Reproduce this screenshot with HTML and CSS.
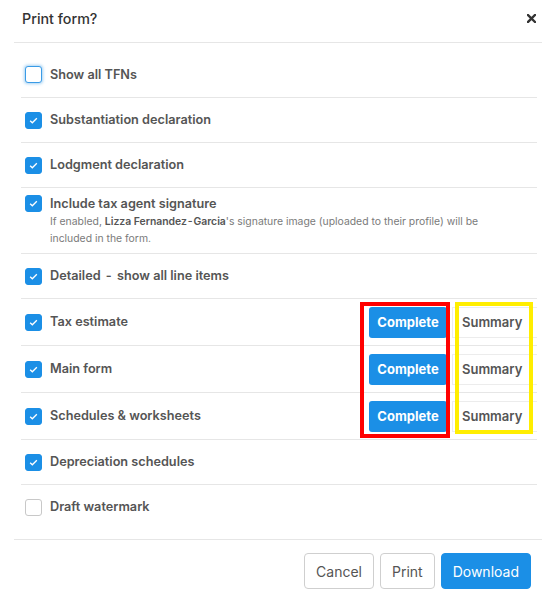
FILE: index.html
```html
<!DOCTYPE html>
<html lang="en">
<head>
<meta charset="utf-8">
<title>Print form?</title>
<link rel="stylesheet" href="styles.css">
</head>
<body>
<div class="modal">
  <div class="modal-header">
    <h1 class="modal-title">Print form?</h1>
    <button class="close" aria-label="Close">
      <svg width="9" height="9" viewBox="0 0 9 9"><path d="M1 1L8 8M8 1L1 8" stroke="#333" stroke-width="2.4" stroke-linecap="square"/></svg>
    </button>
  </div>
  <div class="modal-body">
    <div class="row">
      <span class="cb focus"></span><span class="label">Show all TFNs</span>
    </div>
    <div class="row">
      <span class="cb checked"><svg viewBox="0 0 18 18"><path d="M5 9.2l2.6 2.5L13 6.3" fill="none" stroke="#fff" stroke-width="1.6"/></svg></span><span class="label">Substantiation declaration</span>
    </div>
    <div class="row">
      <span class="cb checked"><svg viewBox="0 0 18 18"><path d="M5 9.2l2.6 2.5L13 6.3" fill="none" stroke="#fff" stroke-width="1.6"/></svg></span><span class="label">Lodgment declaration</span>
    </div>
    <div class="row tall">
      <span class="cb checked"><svg viewBox="0 0 18 18"><path d="M5 9.2l2.6 2.5L13 6.3" fill="none" stroke="#fff" stroke-width="1.6"/></svg></span>
      <div class="stack">
        <span class="label">Include tax agent signature</span>
        <p class="help">If enabled, <b>Lizza Fernandez&#8202;-&#8202;Garcia</b>'s signature image (uploaded to their profile) will be included in the form.</p>
      </div>
    </div>
    <div class="row">
      <span class="cb checked"><svg viewBox="0 0 18 18"><path d="M5 9.2l2.6 2.5L13 6.3" fill="none" stroke="#fff" stroke-width="1.6"/></svg></span><span class="label">Detailed&#8201; - &#8201;show all line items</span>
    </div>
    <div class="group">
      <div class="row actions">
        <span class="cb checked"><svg viewBox="0 0 18 18"><path d="M5 9.2l2.6 2.5L13 6.3" fill="none" stroke="#fff" stroke-width="1.6"/></svg></span><span class="label grow">Tax estimate</span>
        <button class="btn-complete">Complete</button><button class="btn-summary">Summary</button>
      </div>
      <div class="row actions">
        <span class="cb checked"><svg viewBox="0 0 18 18"><path d="M5 9.2l2.6 2.5L13 6.3" fill="none" stroke="#fff" stroke-width="1.6"/></svg></span><span class="label grow">Main form</span>
        <button class="btn-complete">Complete</button><button class="btn-summary">Summary</button>
      </div>
      <div class="row actions">
        <span class="cb checked"><svg viewBox="0 0 18 18"><path d="M5 9.2l2.6 2.5L13 6.3" fill="none" stroke="#fff" stroke-width="1.6"/></svg></span><span class="label grow">Schedules &amp; worksheets</span>
        <button class="btn-complete">Complete</button><button class="btn-summary">Summary</button>
      </div>
      <div class="mark red"></div>
      <div class="mark yellow"></div>
    </div>
    <div class="row">
      <span class="cb checked"><svg viewBox="0 0 18 18"><path d="M5 9.2l2.6 2.5L13 6.3" fill="none" stroke="#fff" stroke-width="1.6"/></svg></span><span class="label">Depreciation schedules</span>
    </div>
    <div class="row last">
      <span class="cb"></span><span class="label">Draft watermark</span>
    </div>
  </div>
  <div class="modal-footer">
    <button class="btn">Cancel</button>
    <button class="btn">Print</button>
    <button class="btn primary">Download</button>
  </div>
</div>
</body>
</html>
```

FILE: styles.css
```css
* { box-sizing: border-box; }
html, body { margin: 0; padding: 0; background: #fff; }
body {
  font-family: Inter, "Noto Sans", "Liberation Sans", sans-serif;
  color: #555;
  width: 542px;
  overflow: hidden;
}
.modal {
  margin-left: 14px;
  width: 528px;
}
.modal-header {
  height: 43px;
  display: flex;
  align-items: center;
  justify-content: space-between;
  padding: 0 6px 6px 8px;
  border-bottom: 1px solid #e6e6e6;
}
.modal-title {
  margin: 0;
  font-size: 14.3px;
  font-weight: 500;
  color: #333;
}
.close {
  border: 0;
  background: none;
  padding: 0;
  width: 9px;
  height: 9px;
  display: flex;
}
.modal-body {
  padding: 10px 5px 10px 7px;
}
.row {
  display: flex;
  align-items: center;
  min-height: 45px;
  padding-left: 4px;
  border-bottom: 1px solid #e6e6e6;
}
.row.last { border-bottom: 0; min-height: 44px; }
.row.tall {
  align-items: flex-start;
  min-height: 66px;
  padding-top: 7px;
}
.row.actions { min-height: 47px; }
.cb {
  flex: none;
  width: 17px;
  height: 17px;
  border-radius: 3px;
  border: 1px solid #c8c8c8;
  background: #fff;
  margin-right: 8px;
  display: flex;
}
.cb.focus {
  border-color: #3a9be6;
  box-shadow: 0 0 3px 1px rgba(58, 155, 230, 0.45);
  margin-top: -2px;
}
.cb.checked {
  background: #1b8fe6;
  border-color: #1b8fe6;
}
.cb svg { width: 100%; height: 100%; }
.label {
  font-size: 12.7px;
  font-weight: 600;
  line-height: 18px;
  color: #555;
}
.grow { flex: 1; }
.stack { display: flex; flex-direction: column; }
.help {
  margin: 0;
  max-width: 432px;
  font-size: 10.4px;
  line-height: 17px;
  color: #7a7a7a;
}
.help b { font-weight: 600; color: #555; }
.btn-complete {
  width: 78px;
  height: 31px;
  border: 0;
  border-radius: 3px;
  background: #1b8fe6;
  color: #fff;
  font-family: inherit;
  font-size: 13px;
  font-weight: 700;
  margin-right: 5px;
}
.btn-summary {
  width: 85px;
  height: 31px;
  border: 1px solid #ececec;
  border-right: 0;
  background: #fff;
  color: #555;
  font-family: inherit;
  font-size: 13px;
  font-weight: 600;
  text-align: left;
  padding: 0 0 0 9px;
}
.group { position: relative; }
.mark {
  position: absolute;
  top: 3px;
  border: 4px solid;
  pointer-events: none;
}
.mark.red {
  left: 339px;
  width: 90px;
  height: 136px;
  border-color: #f00;
}
.mark.yellow {
  left: 434px;
  width: 78px;
  height: 132px;
  border-color: #ffee00;
}
.modal-footer {
  border-top: 1px solid #e6e6e6;
  display: flex;
  justify-content: flex-end;
  gap: 6px;
  padding: 13px 11px 11px 0;
}
.btn {
  height: 36px;
  border: 1px solid #cfcfcf;
  border-radius: 4px;
  background: #fff;
  color: #555;
  font-family: inherit;
  font-size: 14px;
  padding: 0 11px;
}
.btn.primary {
  background: #1b8fe6;
  border-color: #1b8fe6;
  color: #fff;
}
```
